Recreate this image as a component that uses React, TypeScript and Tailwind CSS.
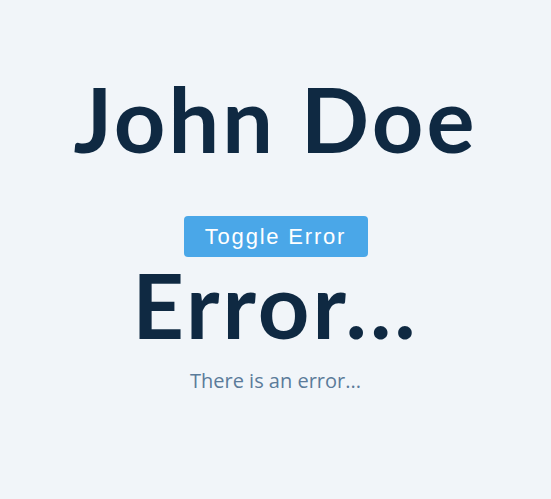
import React, { useState } from 'react';

export default function App() {
  const [hasError, setHasError] = useState(true);

  return (
    <div className="min-h-screen bg-[#f1f5f9] flex flex-col items-center pt-[62px] font-['Lato',sans-serif]">
      <h1 className="text-[90px] leading-none font-bold text-[#0f2942] tracking-[3px] h-[112px] flex items-center">
        John Doe
      </h1>
      <button
        onClick={() => setHasError(!hasError)}
        className="mt-[42px] w-[184px] h-[41px] rounded-[4px] bg-[#4aa7e8] text-white text-[22px] tracking-[1.8px] font-['Liberation_Sans',sans-serif]"
      >
        Toggle Error
      </button>
      {hasError && (
        <>
          <h2 className="text-[90px] leading-none font-bold text-[#0f2942] tracking-[3px] h-[94px] flex items-center">Error...</h2>
          <p className="mt-[15px] text-[20px] text-[#5b7b9a] font-['Open_Sans',sans-serif]">There is an error...</p>
        </>
      )}
    </div>
  );
}
